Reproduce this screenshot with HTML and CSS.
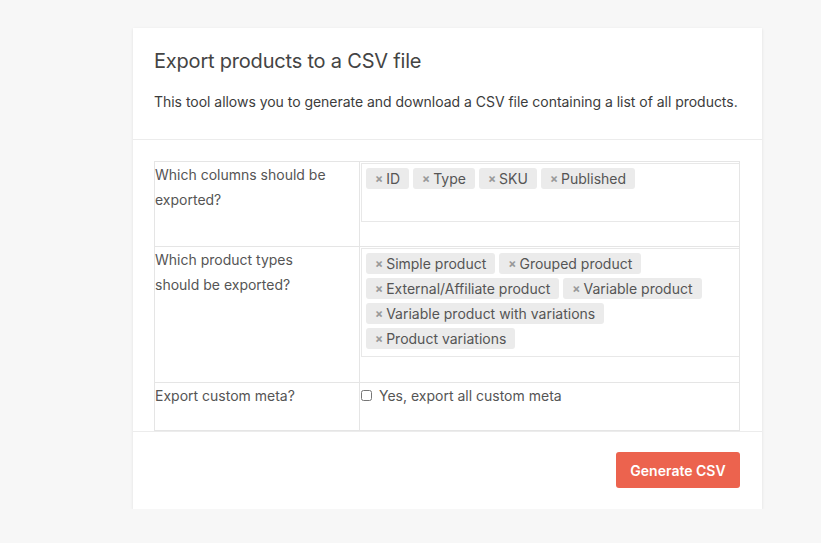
FILE: index.html
```html
<!DOCTYPE html>
<html lang="en">
<head>
<meta charset="utf-8">
<title>Export products to a CSV file</title>
<link rel="stylesheet" href="styles.css">
</head>
<body>
<div class="page">
  <div class="card">
    <header class="card-header">
      <h2 class="title">Export products to a CSV file</h2>
      <p class="desc">This tool allows you to generate and download a CSV file containing a list of all products.</p>
    </header>
    <section class="card-body">
      <table class="form-table">
        <tr class="row-columns">
          <th class="label">Which columns should be exported?</th>
          <td class="field">
            <div class="select tall">
              <span class="tag"><span class="x">×</span>ID</span>
              <span class="tag"><span class="x">×</span>Type</span>
              <span class="tag"><span class="x">×</span>SKU</span>
              <span class="tag"><span class="x">×</span>Published</span>
            </div>
          </td>
        </tr>
        <tr class="row-types">
          <th class="label">Which product types<br>should be exported?</th>
          <td class="field">
            <div class="select">
              <span class="tag"><span class="x">×</span>Simple product</span>
              <span class="tag"><span class="x">×</span>Grouped product</span>
              <span class="tag"><span class="x">×</span>External/Affiliate product</span>
              <span class="tag"><span class="x">×</span>Variable product</span>
              <span class="tag"><span class="x">×</span>Variable product with variations</span>
              <span class="tag"><span class="x">×</span>Product variations</span>
            </div>
          </td>
        </tr>
        <tr class="row-meta">
          <th class="label">Export custom meta?</th>
          <td class="field check-field">
            <label class="check"><input type="checkbox" class="box"> Yes, export all custom meta</label>
          </td>
        </tr>
      </table>
    </section>
    <footer class="card-footer">
      <button class="btn" type="button">Generate CSV</button>
    </footer>
  </div>
</div>
</body>
</html>
```
FILE: styles.css
```css
html, body {
  margin: 0;
  padding: 0;
  background: #f7f7f7;
  font-family: Inter, "Liberation Sans", Arial, sans-serif;
  color: #555;
}

.page {
  padding: 28px 0 0 133px;
}

.card {
  width: 629px;
  background: #fff;
  box-shadow: 0 1px 3px rgba(0, 0, 0, 0.1);
}

.card-header {
  padding: 21px 22px 0 21px;
  height: 90px;
  border-bottom: 1px solid #ececec;
}

.title {
  margin: 0;
  font-size: 20px;
  font-weight: 400;
  line-height: 24px;
  letter-spacing: -0.2px;
  color: #444;
}

.desc {
  margin: 20px 0 0;
  font-size: 14px;
  line-height: 18px;
  letter-spacing: -0.03px;
  white-space: nowrap;
  color: #3c3c3c;
}

.card-body {
  padding: 21px 22px 0 21px;
}

.form-table {
  width: 586px;
  border-collapse: collapse;
  border: 1px solid #e5e5e5;
}

.form-table td,
.form-table th {
  border: 1px solid #e5e5e5;
  padding: 0;
  vertical-align: top;
}

.label {
  width: 205px;
  padding: 0 8px 0 0 !important;
  text-align: left;
  font-weight: 400;
  font-size: 14px;
  line-height: 25px;
  color: #555;
  box-sizing: border-box;
}

.row-columns { height: 85px; }
.row-types { height: 136px; }
.row-meta { height: 48px; }

.field {
  padding: 0 0 24px 0 !important;
}

.select {
  margin: 1px 0 0 1px;
  border: 1px solid #e8e8e8;
  border-right: none;
  padding: 4px 5px 3px 4px;
  display: flex;
  flex-wrap: wrap;
  align-content: flex-start;
}

.select.tall {
  min-height: 50px;
}

.tag {
  display: inline-flex;
  align-items: center;
  height: 21px;
  margin: 0 4px 4px 0;
  padding: 0 9px 0 9px;
  background: #ebebeb;
  border-radius: 3px;
  font-size: 14px;
  color: #555;
  white-space: nowrap;
}

.x {
  font-size: 12px;
  font-weight: 700;
  color: #999;
  margin-right: 3px;
}

.check-field {
  padding: 0 !important;
}

.check {
  display: flex;
  align-items: center;
  height: 25px;
  font-size: 14px;
  color: #555;
}

.box {
  width: 11px;
  height: 11px;
  margin: 0 7px 0 1px;
}

.card-footer {
  border-top: 1px solid #ececec;
  margin-top: 0;
  padding: 20px 22px 21px 0;
  display: flex;
  justify-content: flex-end;
}

.btn {
  width: 124px;
  height: 36px;
  border: none;
  border-radius: 3px;
  background: #ec634e;
  color: #fff;
  font-family: Inter, "Liberation Sans", Arial, sans-serif;
  font-size: 14px;
  font-weight: 600;
}
```
